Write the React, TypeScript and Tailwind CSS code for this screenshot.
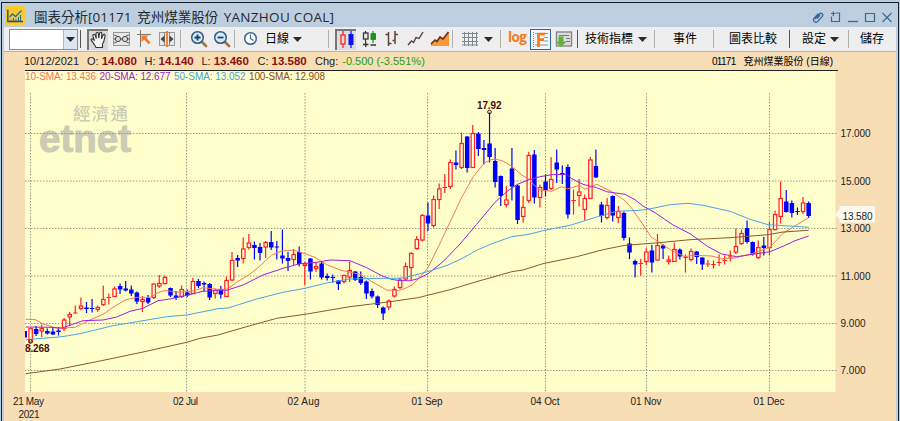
import type { ReactNode } from 'react'
import clsx from 'clsx'

// high, body top, body bottom, low, rising (1) or falling (0)
type Candle = [number, number, number, number, 0 | 1]

const FIRST_X = 30.5
const STEP = 5.598

const candles: Candle[] = [
  [328.7, 328.7, 342, 342, 1],
  [326, 329, 334, 336, 0],
  [324.5, 328.5, 331, 337, 1],
  [328.5, 331, 333.5, 334.5, 0],
  [328, 331.5, 334.5, 335, 0],
  [327.5, 330.5, 332, 335.5, 0],
  [318, 320, 328.5, 331, 1],
  [312, 314.5, 317, 326, 1],
  [305.5, 312.5, 313.5, 313.5, 1],
  [297.5, 306, 308.5, 310, 1],
  [302, 307.5, 309, 313, 0],
  [299, 308, 309, 312.5, 0],
  [305.5, 307.5, 309.5, 312, 1],
  [285.5, 299.5, 304.5, 306, 1],
  [293.5, 297, 298, 304.5, 1],
  [286.5, 289, 296.5, 297, 1],
  [283.5, 286, 289.5, 294, 0],
  [281, 288.5, 290.5, 291.5, 0],
  [285.5, 289.5, 293.5, 296, 0],
  [291.5, 292.5, 301.5, 304, 0],
  [296, 299.5, 301.5, 312, 1],
  [295, 298, 302.5, 304, 0],
  [283.5, 284, 297.5, 299, 1],
  [275, 283.5, 286, 288, 1],
  [275.5, 277.5, 283.5, 284.5, 1],
  [287.5, 288, 295.5, 297, 0],
  [291, 295.5, 298, 300, 0],
  [285.5, 289.5, 296.5, 298, 1],
  [289.5, 292.5, 295.5, 297, 0],
  [278, 281.5, 293.5, 294, 1],
  [279, 281, 286, 288, 0],
  [281.5, 283, 284.5, 291.5, 0],
  [283, 284, 297.5, 300, 0],
  [288.5, 290.5, 293.5, 298.5, 1],
  [286, 289, 294.5, 298.5, 0],
  [276.5, 280.5, 296.5, 297, 1],
  [252, 260.5, 280, 281, 1],
  [255, 258, 260.5, 267, 0],
  [237.5, 249, 258.5, 263.5, 1],
  [234, 243, 247.5, 249.5, 1],
  [241.5, 245, 248, 259.5, 0],
  [243, 247, 253, 260.5, 0],
  [241, 242.5, 247, 258, 1],
  [231, 242, 247.5, 250, 0],
  [241, 246.5, 247.5, 259.5, 0],
  [229.5, 255.5, 258.5, 263.5, 0],
  [252, 258, 261, 271, 0],
  [249, 254.5, 259.5, 265, 1],
  [246.5, 252, 264, 266.5, 0],
  [262, 264, 265.5, 285, 1],
  [258, 258.5, 271.5, 279.5, 0],
  [262, 266.5, 268.5, 272, 1],
  [261.5, 263.5, 277.5, 279.5, 0],
  [273.5, 276, 278, 280.5, 0],
  [274.5, 277, 278, 282.5, 0],
  [280, 280.5, 284, 290, 0],
  [274.5, 275.5, 281.5, 283.5, 1],
  [261.5, 270.5, 277, 282, 1],
  [271, 271.5, 280, 281, 0],
  [271.5, 277, 283, 285, 0],
  [280.5, 281.5, 293.5, 299, 0],
  [288.5, 291, 296.5, 298.5, 0],
  [295.5, 296.5, 305, 308, 0],
  [306.5, 307.5, 313.5, 320, 0],
  [299.5, 301, 307, 310, 1],
  [286.5, 289.5, 296, 297.5, 1],
  [277.5, 280, 287.5, 289, 1],
  [262.5, 266.5, 279, 280.5, 1],
  [252, 253.5, 267.5, 280.5, 1],
  [236, 239.5, 248.5, 250, 1],
  [214, 215.5, 240, 241.5, 1],
  [202.5, 215.5, 223.5, 231, 0],
  [195.5, 199.5, 225.5, 227.5, 1],
  [183.5, 189, 199.5, 209, 1],
  [174, 187, 188, 193, 1],
  [159.5, 162.5, 186.5, 189, 1],
  [150.5, 162.5, 165, 169.5, 0],
  [132.5, 143.5, 167.5, 169, 1],
  [136, 136.5, 168, 172.5, 0],
  [125, 133.5, 167.5, 168, 1],
  [132, 133.5, 149, 156, 0],
  [140, 148, 150, 164.5, 0],
  [112.5, 143.5, 157, 162.5, 0],
  [148, 161, 182, 187.5, 0],
  [175.5, 176, 196, 206, 0],
  [186, 200, 204.5, 207.5, 1],
  [148, 168.5, 186.5, 200.5, 0],
  [185, 185.5, 220, 224, 0],
  [196, 207.5, 216.5, 222.5, 1],
  [152, 155.5, 200.5, 203, 1],
  [150, 154.5, 197.5, 203.5, 0],
  [184.5, 187.5, 197.5, 207.5, 1],
  [174.5, 181.5, 190.5, 196.5, 0],
  [157, 179.5, 188.5, 190, 1],
  [149.5, 162.5, 169.5, 183, 0],
  [165.5, 173, 174, 184, 0],
  [164.5, 167, 214.5, 218.5, 0],
  [189.5, 200, 201, 214.5, 1],
  [179, 192, 195.5, 206.5, 1],
  [194.5, 198.5, 209.5, 220.5, 1],
  [157, 160, 198.5, 199, 1],
  [149.5, 166, 177.5, 178, 0],
  [202, 204.5, 216, 222.5, 0],
  [198, 205.5, 217.5, 219.5, 1],
  [195.5, 196, 215.5, 221.5, 0],
  [206, 211.5, 217.5, 223, 1],
  [211.5, 213, 238, 240.5, 0],
  [237.5, 243.5, 252.5, 259, 0],
  [259.5, 261, 264.5, 277.5, 0],
  [259, 263, 264, 275.5, 1],
  [248, 252, 261.5, 265, 1],
  [245, 250.5, 262.5, 272.5, 0],
  [234, 245.5, 260, 260.5, 1],
  [244, 245.5, 248.5, 259, 0],
  [255.5, 260, 261.5, 264.5, 1],
  [242.5, 249.5, 261.5, 262, 1],
  [248.5, 249.5, 256.5, 259.5, 0],
  [254.5, 257, 258, 272.5, 1],
  [248.5, 251.5, 259.5, 261.5, 1],
  [251, 251.5, 257, 264, 0],
  [257.5, 257.5, 264.5, 270, 0],
  [260, 263.5, 264.5, 267, 1],
  [260.5, 264, 265, 268.5, 1],
  [254.5, 262, 263, 266, 1],
  [255.5, 260, 261, 264.5, 1],
  [250.5, 256.5, 257.5, 261.5, 1],
  [228.5, 246.5, 252, 254, 1],
  [229.5, 233.5, 243.5, 245, 1],
  [220.5, 228, 242, 243.5, 0],
  [241.5, 242, 254, 255.5, 0],
  [240.5, 247.5, 257.5, 259, 1],
  [237, 245.5, 248, 255.5, 0],
  [221.5, 229.5, 247.5, 255, 1],
  [210.5, 214.5, 229.5, 230.5, 1],
  [181.5, 198.5, 216.5, 223.5, 1],
  [190, 201.5, 212, 212.5, 0],
  [200.5, 203, 213, 217.5, 0],
  [207.5, 211, 212, 215, 0],
  [197, 203, 211.5, 214, 1],
  [201.5, 203, 216, 218, 0],
]

const averages = [
  {
    color: '#f87858',
    points:
      '25.7,319.3 35,319.5 43,324 57,328.3 75,327.3 90,320 103,314.3 113,307.3 125,300 137,297.3 150,297.3 158,292.7 165,290.3 177,292.3 193,291 203,287.7 218,289.3 226.7,289.3 236.7,282.3 250,274 258,267.7 271.7,255 281.7,251 293.3,250 305,253.7 315,257.3 326.7,264.7 340,270 360,274.3 373,282.3 386.7,290 398.3,290.5 405,288.5 413,284.3 418,279 427.7,268.3 440,243.3 461.7,197.3 473.3,176.7 484,163.3 490,160 495,159 503,161 512.3,166.7 521.7,175 529.3,179.3 534,185 540,190 551.7,191.3 561.7,186.7 567.7,189 579.3,185.3 585,189.3 596.7,184.3 610,190.7 625,200.7 631.7,208.3 643.3,225 651,237 658.3,241.7 671.7,250.7 685,256.7 693,255.3 711.7,256 721.7,258.7 735,258 753,253.3 770,247.3 776.7,240 783,233.3 795,226 808.3,217.7',
  },
  {
    color: '#a020e0',
    points:
      '25.7,327 50,327.3 61.7,328 70,325.3 83,320.7 103,320 116.7,317 130,311.3 143,308.3 158,300.7 170,299 186.7,295.3 203,291.3 218,290.3 226.7,290.3 243,285 263,275 283,268.3 300,263.7 316.7,262.3 330,260 350,260.7 366.7,267.7 381.7,275.7 392,279.5 400,280.6 410,280.8 418,278.7 427.7,274 443,261.7 460,244 476.7,224.3 495,202.3 506.7,191.7 516.7,184.7 528,180 540,176.7 551.7,174.7 566.7,174.3 571.7,178.7 583,184.3 596.7,187.7 606.7,191.7 625,194.3 635,199.7 643,206 655,212.7 673,225 690,233.7 708,246.7 721.7,254 736.7,256.7 755,254 770,251.7 783,246.3 795,240.7 808.7,236',
  },
  {
    color: '#4ba3e8',
    points:
      '25.7,339.7 50,337.7 62,336.7 80,333.7 113,325.7 143,320.7 166.7,316.7 186.7,315 218,308.7 228,308 256.7,299 283,292.3 305,288.3 326.7,283 350,279 380,278.3 400,278.3 415,275 430,271 448,265 463,258 476.7,250.3 493,243.3 511.7,236.7 529,234.3 543,230.7 570,225.3 596.7,217 616.7,211.3 640,210.3 653,208.3 670,204.7 688,203.3 703,205.3 730,211.3 750,219.3 768,224.7 790,226 808.7,227.3',
  },
  {
    color: '#8b5a2b',
    points:
      '25.7,373.7 60,369 100,361 143,352 186.7,342.3 200,338.3 218,335 243,327.7 276.7,318.3 305,314.3 350,306.7 388,302 418,297.7 450,289.7 480,280.7 511.7,271.7 523,270 543,263.7 576.7,256.7 603,249.7 625,245.3 659,242.7 690,239.7 730,237.7 768,234.7 783,232 808.7,230.3',
  },
]

const priceTicks = [
  { y: 133.5, label: '17.000', width: 30 },
  { y: 181, label: '15.000', width: 30 },
  { y: 228.5, label: '13.000', width: 30 },
  { y: 276, label: '11.000', width: 30 },
  { y: 323.5, label: '9.000', width: 25 },
  { y: 370.5, label: '7.000', width: 25 },
]

const dateTicks = [
  { x: 30.5, labelX: 13, label: '21 May', width: 31 },
  { x: 186.5, labelX: 173, label: '02 Jul', width: 25 },
  { x: 305, labelX: 287.5, label: '02 Aug', width: 32 },
  { x: 427.5, labelX: 411.5, label: '01 Sep', width: 31 },
  { x: 545.5, labelX: 530.5, label: '04 Oct', width: 29 },
  { x: 646.5, labelX: 630.5, label: '01 Nov', width: 31 },
  { x: 769.5, labelX: 753.5, label: '01 Dec', width: 31 },
]

const legend = [
  { x: 25, width: 71, text: '10-SMA: 13.436', color: '#f87060' },
  { x: 99.5, width: 71, text: '20-SMA: 12.677', color: '#a020d8' },
  { x: 174, width: 71.5, text: '50-SMA: 13.052', color: '#4ba0e0' },
  { x: 249, width: 76, text: '100-SMA: 12.908', color: '#8b4a20' },
]

const quotes = [
  { label: 'O:', value: '14.080', className: 'w-[57.5px]' },
  { label: 'H:', value: '14.140', className: 'w-[57px]' },
  { label: 'L:', value: '13.460', className: 'w-[56px]' },
  { label: 'C:', value: '13.580', className: 'w-[57.5px]' },
]

function Separator({ className, dark }: { className: string; dark?: boolean }) {
  return <div className={clsx('h-[18px] w-px shrink-0', dark ? 'bg-[#555]' : 'bg-[#b0b0b0]', className)} />
}

function Caret({ className }: { className?: string }) {
  return (
    <svg className={clsx('h-[5px] w-[9px] shrink-0', className)} viewBox="0 0 9 5">
      <path d="M0 0h9L4.500 5z" fill="#2a2a2a" />
    </svg>
  )
}

function Label({ className, children }: { className: string; children: ReactNode }) {
  return <span className={clsx('shrink-0 whitespace-nowrap text-[12px] leading-none text-black', className)}>{children}</span>
}

function ToolIcon({ className, width, children }: { className: string; width: number; children: ReactNode }) {
  return (
    <svg className={clsx('h-5 shrink-0', className)} viewBox={`0 0 ${width} 20`} fill="none">
      {children}
    </svg>
  )
}

function TitleBar() {
  return (
    <div className="flex h-6 shrink-0 items-center">
      <svg className="mt-[2px] ml-px h-5 w-5 shrink-0" viewBox="0 0 20 20" fill="none">
        <rect width="20" height="19" rx="2.5" fill="#fcc92f" />
        <path d="M4 11.500l3-3 3 2 6-6V15H4z" fill="#e2c95c" />
        <path d="M2.800 3.500V15.500H18" stroke="#1d5278" strokeWidth="1.400" />
        <path d="M4.500 11l3-3 3 2.500L16.500 4.500" stroke="#2b6c8c" strokeWidth="1.300" />
        <path d="M6 13.500v1.500M8.500 12v3M11 13v2M13.500 11v4M15.500 9v6" stroke="#2b6c8c" strokeWidth="1" />
      </svg>
      <h1 className="mt-[6px] ml-[9px] w-[310px] whitespace-nowrap text-[13.5px] leading-none text-[#1f2733] [word-spacing:2px] font-['Open_Sans','Noto_Sans_CJK_TC',sans-serif]">
        圖表分析<span className="tracking-[0.1px]">[01171</span> 兗州煤業股份{' '}
        <span className="tracking-[0.3px] [word-spacing:0px]">YANZHOU COAL]</span>
      </h1>
      <svg className="mt-[4px] mr-[2px] ml-auto h-3 w-[82px] shrink-0" viewBox="812 10 82 12" fill="none" stroke="#336a9b">
        <path d="M815 18l4.500-5a1.800 1.800 0 0 1 2.800 2.400l-4.500 5a2.400 2.400 0 0 1-3.600-3.200l4-4.600M817 17.500l3-3.500" strokeWidth="1.300" />
        <path d="M836 12h3.500v8.500h-8v-5M831 12.500h4.500M833.300 10.500v4.500" strokeWidth="1.200" />
        <path d="M848 20.500h10" strokeWidth="1.300" />
        <path d="M865.500 12.500h9v8h-9z" strokeWidth="1.200" />
        <path d="M882.500 12l9 9M891.500 12l-9 9" strokeWidth="1.100" />
      </svg>
    </div>
  )
}

function Toolbar() {
  return (
    <div className="flex h-[25px] shrink-0 items-center border-b border-[#b4b4b4] bg-[#eee]">
      <div className="ml-[5px] flex h-[21px] w-[69px] shrink-0 border border-[#7795ad] bg-white">
        <div className="ml-auto flex w-[14px] items-center justify-center border-l border-[#a5bacb] bg-[#dce7f1]">
          <Caret />
        </div>
      </div>
      <Separator className="ml-[2px]" dark />
      <div className="ml-[6px] flex h-[21px] w-[21px] shrink-0 items-center justify-center border-t-2 border-l-2 border-[#777] bg-[#d9d9d9]">
        <svg className="h-[18px] w-[18px]" viewBox="0 0 18 18">
          <path
            d="M6 16.500C4.500 13 2 11 1 8.500c.6-1.200 2-.9 3.500 1.300L2.800 4.500c.2-1.700 1.800-1.600 2.500 0l1 3L6 2.500C6.300.9 8 .9 8.400 2.500l.4 4.700.8-5c.6-1.400 2.200-1.200 2.200.5l-.3 5 1.500-3.600c.9-1.300 2.300-.6 2 .8-.6 3.500-.6 5.800-2.500 8.100v3.500z"
            fill="#f4f4f4"
            stroke="#333"
            strokeWidth="1.100"
          />
        </svg>
      </div>
      <ToolIcon className="ml-[5px] w-[18px]" width={18}>
        <rect x=".5" y="3.500" width="16" height="13" fill="#e8e8e8" stroke="#999" />
        <path d="M1 10h16" stroke="#555" />
        <circle cx="5" cy="10" r="2.600" fill="#ddd" stroke="#444" />
        <circle cx="12" cy="10" r="2.600" fill="#ddd" stroke="#444" />
        <path d="M1 6l3 1M1 14l3-1M16 6l-3 1M16 14l-3-1" stroke="#666" />
      </ToolIcon>
      <ToolIcon className="ml-[6px] w-[16px]" width={16}>
        <path d="M0 5.500h14M3.500 1v17" stroke="#777" />
        <path d="M4.500 6.500h7l-2.200 2.200 4.200 4.800-2 1.800-4.300-4.700-2.700 2.500z" fill="#f47a20" />
      </ToolIcon>
      <ToolIcon className="ml-[5px] w-[18px]" width={18}>
        <rect x="1.500" y="3.500" width="15" height="13" fill="#e8e8e8" stroke="#999" />
        <path d="M6.500 3v14M11.500 3v14" stroke="#888" />
        <path d="M9 2v16" stroke="#f47a20" strokeWidth="1.800" />
        <path d="M6.500 6.500v7L2.500 10zM11.500 6.500v7l4-3.500z" fill="#444" />
      </ToolIcon>
      <Separator className="ml-[4px]" />
      {[true, false].map((zoomIn) => (
        <ToolIcon key={String(zoomIn)} className={zoomIn ? 'ml-[9px] w-[18px]' : 'ml-[5px] w-[18px]'} width={18}>
          <path d="M11.500 12.500l4.500 4.500" stroke="#a07848" strokeWidth="2.800" strokeLinecap="round" />
          <circle cx="7.500" cy="8.500" r="5.800" fill="#d7e9f8" stroke="#335b86" strokeWidth="1.500" />
          <path d={zoomIn ? 'M4.500 8.500h6M7.500 5.500v6' : 'M4.500 8.500h6'} stroke="#20405f" strokeWidth="1.800" />
        </ToolIcon>
      ))}
      <Separator className="ml-[3px]" />
      <ToolIcon className="ml-[8px] w-[15px]" width={15}>
        <circle cx="7.500" cy="9.500" r="5.800" fill="#fff" stroke="#3c668c" strokeWidth="1.500" />
        <path d="M7.500 5.500v4l3 2" stroke="#3c668c" strokeWidth="1.200" />
      </ToolIcon>
      <Label className="ml-[7px] w-[24px]">日線</Label>
      <Caret className="ml-[4px]" />
      <Separator className="ml-[26px]" />
      <div className="ml-[6px] flex h-[21px] w-[21px] shrink-0 items-center justify-center border-t-2 border-l-2 border-[#777] bg-[#dedede]">
        <svg className="h-[18px] w-[17px]" viewBox="0 0 17 18" fill="none">
          <path d="M5 0v4M5 13v4" stroke="#f22" strokeWidth="1.300" />
          <rect x="3" y="4" width="4" height="9" stroke="#f22" strokeWidth="1.300" />
          <path d="M13 0v17" stroke="#11f" strokeWidth="1.300" />
          <rect x="10.500" y="3" width="5" height="11" fill="#11e" />
        </svg>
      </div>
      <ToolIcon className="ml-[6px] w-[16px]" width={16}>
        <path d="M3.500 2v2.500M3.500 10v3" stroke="#4a3030" strokeWidth="1.200" />
        <rect x="1.500" y="4" width="4.500" height="6" stroke="#4a3030" strokeWidth="1.300" />
        <path d="M11 2v12" stroke="#2a8a20" strokeWidth="1.200" />
        <rect x="8.500" y="4" width="5.500" height="7" rx="1" fill="#189818" />
        <path d="M1 15.500h5.500M3.700 13v5M8.500 16h5.500" stroke="#333" strokeWidth="1.300" />
      </ToolIcon>
      <ToolIcon className="ml-[7px] w-[14px]" width={14}>
        <path d="M3.500 3v14M.5 5.500h3M3.500 14.500h3M10 2v13M7.500 11.500H10M10 5.500h3" stroke="#5a4638" strokeWidth="1.500" />
      </ToolIcon>
      <ToolIcon className="ml-[8px] w-[17px]" width={17}>
        <path d="M1 16l3.500-4 2 1.500 2.500-5 3 1L16 3" stroke="#5a4038" strokeWidth="1.400" />
      </ToolIcon>
      <ToolIcon className="ml-[6px] w-[20px]" width={20}>
        <path d="M1 15l4-4 2 1.500L10 8l3 2 6-7v14H1z" fill="#f99a38" />
        <path d="M1 15l4-4 2 1.500L10 8l3 2 5.500-7" stroke="#70341c" strokeWidth="1.700" />
      </ToolIcon>
      <Separator className="ml-[2px]" />
      <ToolIcon className="ml-[9px] w-[17px]" width={17}>
        <path d="M2.500 3v14M6.500 3v14M10.500 3v14M14.500 3v14M0 4.500h16M0 8.500h16M0 12.500h16M0 16h16" stroke="#7d8794" strokeWidth="1" />
      </ToolIcon>
      <Caret className="ml-[5px]" />
      <Separator className="ml-[7px]" />
      <span className="mb-[3px] ml-[7px] w-[21px] shrink-0 text-[13.5px] leading-none font-bold tracking-[-0.6px] text-[#f47a20] font-['Open_Sans',sans-serif]">
        log
      </span>
      <div className="ml-px h-[21px] w-[21px] shrink-0 border border-[#2c66a3] bg-[#f3f6fa]">
        <svg className="h-[19px] w-[19px]" viewBox="0 0 19 19" fill="none">
          <path d="M2.500 2v15" stroke="#778" strokeDasharray="1 1" />
          <path d="M4 3.500h13M13 7.500h4M13 11h4M4 15h13" stroke="#8898a8" strokeWidth="1.100" />
          <path d="M7.500 17V4H14M7.500 9.700h5.500" stroke="#f47a20" strokeWidth="2.700" />
        </svg>
      </div>
      <ToolIcon className="ml-[4px] w-[19px]" width={19}>
        <rect x="1.500" y="3" width="15" height="14" fill="#ddd" stroke="#888" strokeWidth="1.400" />
        <path d="M4 6.500h10M11 9.500h4M11 12.500h4" stroke="#777" />
        <path d="M3.500 7.500h5v5h3L6 18 .5 12.500h3z" fill="#62b238" />
      </ToolIcon>
      <Separator className="ml-[3px]" dark />
      <Label className="ml-[7px] w-[49px]">技術指標</Label>
      <Caret className="ml-[4px]" />
      <Separator className="ml-[7px]" />
      <Label className="ml-[18px] w-[25px]">事件</Label>
      <Separator className="ml-[15px]" />
      <Label className="ml-[15px] w-[49px]">圖表比較</Label>
      <Separator className="ml-[11px]" dark />
      <Label className="ml-[12px] w-[25px]">設定</Label>
      <Caret className="ml-[3px]" />
      <Separator className="ml-[9px]" />
      <Label className="ml-[11px]">儲存</Label>
    </div>
  )
}

function QuoteRow() {
  return (
    <div className="flex h-[18px] shrink-0 items-baseline pt-[3px] pl-[20px] text-[11px] leading-[12px] whitespace-nowrap text-[#222]">
      <span className="w-[63px]">10/12/2021</span>
      {quotes.map((q) => (
        <span key={q.label} className={clsx('flex shrink-0 items-baseline gap-[3px]', q.className)}>
          {q.label}
          <b className="text-[11.5px] text-[#8b1010]">{q.value}</b>
        </span>
      ))}
      <span className="mr-[4px]">Chg:</span>
      <span className="text-[#20a020]">-0.500 (-3.551%)</span>
      <span className="mr-[63px] ml-auto text-[10px] text-black">
        <span className="mr-[8px] tracking-[-0.7px]">01171</span>兗州煤業股份 (日線)
      </span>
    </div>
  )
}

function Chart() {
  return (
    <svg
      className="h-[351px] w-[892px] shrink-0 font-['Liberation_Sans','Noto_Sans_CJK_TC',sans-serif]"
      viewBox="4 70 892 351"
      fontSize="10"
    >
      <rect x="25" y="70" width="810.500" height="322" fill="#ffffcc" />
      <rect x="25" y="70" width="813" height="1" fill="#222" />

      <g fill="#cccbb3">
        <text x="73" y="119.500" fontSize="17.500" fontWeight="500" textLength="55">
          經濟通
        </text>
        <text
          x="39"
          y="152"
          fontSize="38"
          fontWeight="800"
          textLength="92"
          lengthAdjust="spacingAndGlyphs"
          stroke="#cccbb3"
          strokeWidth="1"
          className="font-['Liberation_Sans',sans-serif]"
        >
          etnet
        </text>
      </g>

      <g stroke="#999988" strokeDasharray="1.500 1.500" strokeWidth="1">
        {priceTicks.map((t) => (
          <line key={t.label} x1="25" x2="838" y1={t.y} y2={t.y} />
        ))}
        {dateTicks.map((t) => (
          <line key={t.label} x1={t.x} x2={t.x} y1="93" y2="392" />
        ))}
      </g>

      <rect x="25" y="331" width="2" height="6.500" fill="#0000ff" />
      {candles.map(([high, top, bottom, low, up], i) => {
        const x = FIRST_X + i * STEP
        const color = up ? '#ff2020' : '#0000ff'
        const flat = bottom - top < 1.2
        return (
          <g key={i}>
            <line x1={x} x2={x} y1={high} y2={low} stroke={color} strokeWidth="1.200" />
            {up && !flat ? (
              <rect x={x - 1.6} y={top} width="3.400" height={bottom - top} fill="#ffffd8" stroke={color} strokeWidth="1.200" />
            ) : (
              <rect x={x - 2.2} y={top} width="4.500" height={bottom - top} fill={color} />
            )}
          </g>
        )
      })}

      {averages.map((a) => (
        <polyline key={a.color} points={a.points} fill="none" stroke={a.color} strokeWidth="1" strokeLinejoin="round" />
      ))}

      {legend.map((l) => (
        <text key={l.text} x={l.x} y="80" fill={l.color} textLength={l.width}>
          {l.text}
        </text>
      ))}

      <g fill="#4d0c0c" fontWeight="bold">
        <text x="477" y="108.500" textLength="24.500">17.92</text>
        <text x="25" y="352" textLength="24.500">8.268</text>
      </g>
      <g fill="none" stroke="#4d0c0c">
        <circle cx="489.500" cy="112" r="1.800" />
        <circle cx="30.500" cy="341.500" r="1.800" />
      </g>

      <g fill="#222">
        {priceTicks.map((t) => (
          <text key={t.label} x="840.500" y={t.y + 3.5} textLength={t.width}>
            {t.label}
          </text>
        ))}
        {dateTicks.map((t) => (
          <text key={t.label} x={t.labelX} y="405" textLength={t.width}>
            {t.label}
          </text>
        ))}
        <text x="18.500" y="417.500" textLength="21">2021</text>
      </g>

      <path d="M835.500 214.500l4-6v-2.500h35.500v16.500h-35.500v-3z" fill="#fffaf0" />
      <text x="842.500" y="219.500" fill="#222" textLength="30">13.580</text>
    </svg>
  )
}

export default function App() {
  return (
    <div className="h-[421px] w-[900px] overflow-hidden bg-[#b9cde0] pt-[2px] pr-px pl-px font-['Liberation_Sans','Noto_Sans_CJK_TC',sans-serif]">
      <div className="flex h-[419px] flex-col border-x border-t border-[#16202c] bg-[#bdcfdf] pr-[2px] pl-[2px]">
        <TitleBar />
        <Toolbar />
        <div className="flex flex-1 flex-col bg-[#f7deb5]">
          <QuoteRow />
          <Chart />
        </div>
      </div>
    </div>
  )
}
